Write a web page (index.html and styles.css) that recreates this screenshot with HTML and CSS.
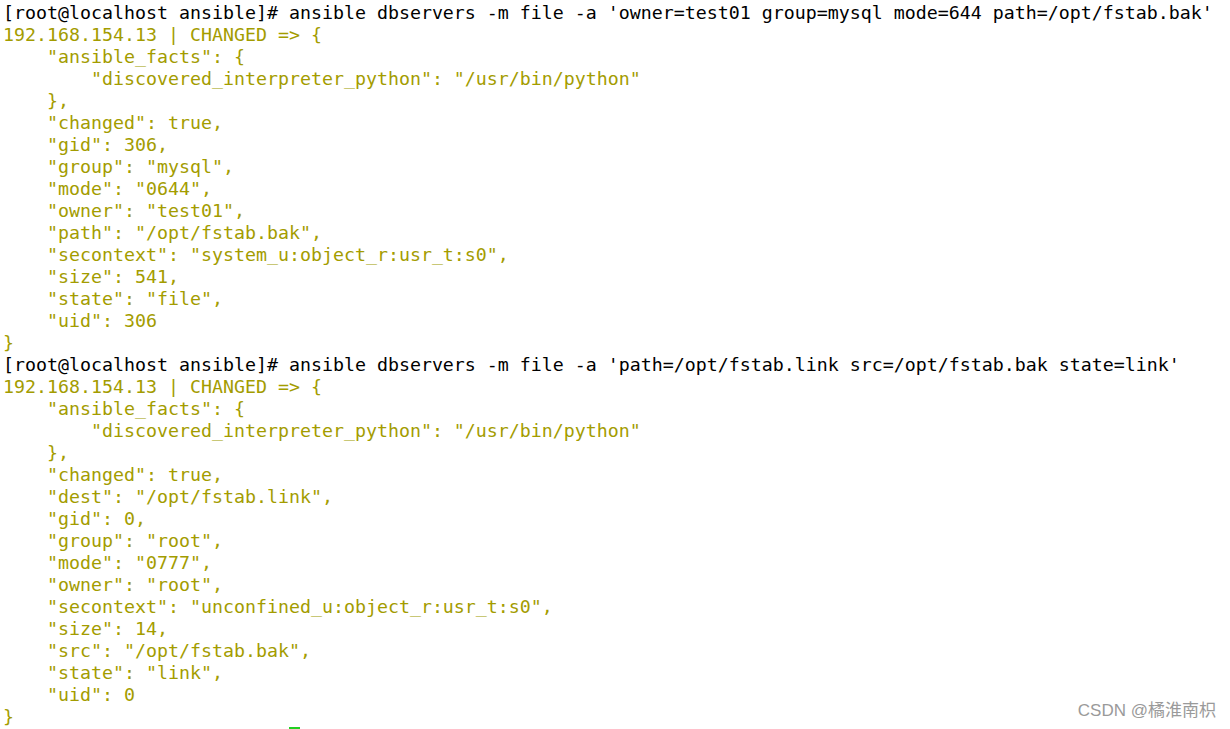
FILE: index.html
```html
<!DOCTYPE html>
<html>
<head>
<meta charset="utf-8">
<link rel="stylesheet" href="styles.css">
</head>
<body>
<div class="term">
<div class="ln cmd">[root@localhost ansible]# ansible dbservers -m file -a 'owner=test01 group=mysql mode=644 path=/opt/fstab.bak'</div>
<div class="ln out">192.168.154.13 | CHANGED =&gt; {</div>
<div class="ln out">    "ansible_facts": {</div>
<div class="ln out">        "discovered_interpreter_python": "/usr/bin/python"</div>
<div class="ln out">    }, </div>
<div class="ln out">    "changed": true, </div>
<div class="ln out">    "gid": 306, </div>
<div class="ln out">    "group": "mysql", </div>
<div class="ln out">    "mode": "0644", </div>
<div class="ln out">    "owner": "test01", </div>
<div class="ln out">    "path": "/opt/fstab.bak", </div>
<div class="ln out">    "secontext": "system_u:object_r:usr_t:s0", </div>
<div class="ln out">    "size": 541, </div>
<div class="ln out">    "state": "file", </div>
<div class="ln out">    "uid": 306</div>
<div class="ln out">}</div>
<div class="ln cmd">[root@localhost ansible]# ansible dbservers -m file -a 'path=/opt/fstab.link src=/opt/fstab.bak state=link'</div>
<div class="ln out">192.168.154.13 | CHANGED =&gt; {</div>
<div class="ln out">    "ansible_facts": {</div>
<div class="ln out">        "discovered_interpreter_python": "/usr/bin/python"</div>
<div class="ln out">    }, </div>
<div class="ln out">    "changed": true, </div>
<div class="ln out">    "dest": "/opt/fstab.link", </div>
<div class="ln out">    "gid": 0, </div>
<div class="ln out">    "group": "root", </div>
<div class="ln out">    "mode": "0777", </div>
<div class="ln out">    "owner": "root", </div>
<div class="ln out">    "secontext": "unconfined_u:object_r:usr_t:s0", </div>
<div class="ln out">    "size": 14, </div>
<div class="ln out">    "src": "/opt/fstab.bak", </div>
<div class="ln out">    "state": "link", </div>
<div class="ln out">    "uid": 0</div>
<div class="ln out">}</div>
<div class="ln cmd"><span class="pad">                          </span><span class="cursor"> </span></div>
</div>
<div class="watermark">CSDN @橘淮南枳</div>
</body>
</html>
```
FILE: styles.css
```css
html, body {
  margin: 0;
  padding: 0;
  background: #ffffff;
  width: 1230px;
  height: 729px;
  overflow: hidden;
}
body {
  position: relative;
}
.term {
  padding: 2px 0 0 3px;
  font-family: "DejaVu Sans Mono", monospace;
  font-size: 18.27px;
  line-height: 22px;
}
.ln {
  white-space: pre;
  height: 22px;
}
.cmd {
  color: #000000;
}
.out {
  color: #a39c00;
}
.cursor {
  display: inline-block;
  width: 11px;
  height: 22px;
  vertical-align: top;
  box-sizing: border-box;
  border-top: 2px solid #22d022;
  margin-top: -1px;
}
.watermark {
  position: absolute;
  right: 14px;
  top: 700px;
  font-family: "Liberation Sans", "Noto Sans CJK SC", sans-serif;
  font-size: 17px;
  color: #9a9a9a;
  line-height: 22px;
}
```
